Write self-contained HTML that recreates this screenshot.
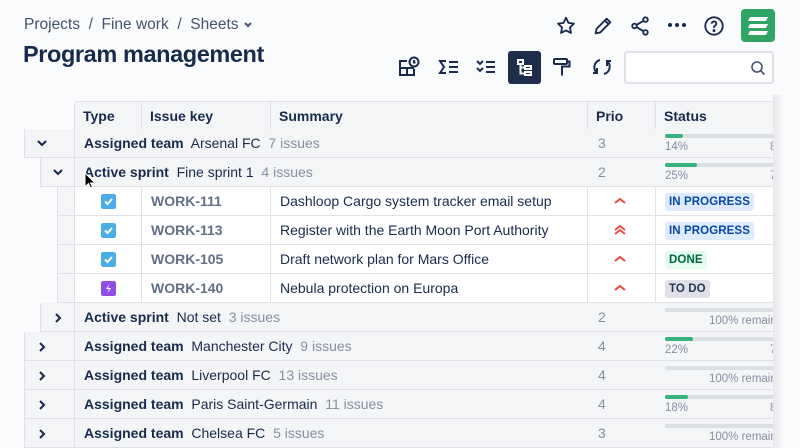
<!DOCTYPE html>
<html><head><style>
*{box-sizing:border-box;margin:0;padding:0}
body{width:800px;height:448px;overflow:hidden;background:#fafbfc;font-family:"Liberation Sans",sans-serif;color:#172b4d;position:relative}
.a{position:absolute}
.bc{left:24px;top:16px;font-size:15.5px;color:#44546f}
h1{position:absolute;left:23px;top:41px;font-size:23.5px;font-weight:bold;color:#172b4d;letter-spacing:-0.4px}
.tbl{position:absolute;left:0;top:0;width:773px;height:448px;overflow:hidden}
.row{position:absolute;height:29px;border-bottom:1px solid #dfe1e6;font-size:14px;line-height:28px;white-space:nowrap}
.g{background:#f4f5f7}
.cell{position:absolute;top:0;height:28px;border-right:1px solid #dfe1e6}
b{font-weight:bold;color:#172b4d}
.mut{color:#8590a2}
.num{position:absolute;color:#8590a2}
.bar{position:absolute;top:5px;width:140px;height:4px;background:#dcdfe4;border-radius:2px}
.bar i{display:block;height:4px;background:#36b37e;border-radius:2px}
.pct{position:absolute;top:12px;font-size:11.5px;line-height:12px;color:#8590a2}
.rem{position:absolute;top:12px;font-size:11.5px;line-height:12px;color:#8590a2}
.chev{position:absolute;top:9px}
.lz{font-size:11.5px;font-weight:bold;padding:1px 4px;border-radius:3px;line-height:16px;position:absolute;top:6px;letter-spacing:.1px}
.shadow{position:absolute;left:773px;top:95px;width:10px;height:353px;background:linear-gradient(90deg,rgba(0,0,0,.08),rgba(0,0,0,0))}
.ic{position:absolute;top:56px}
.ty{position:absolute;left:43px;top:7px;width:15px;height:15px;border-radius:2px}
.pr{position:absolute;left:555px;top:8px}
</style></head><body>
<div class="a bc">Projects&nbsp;&nbsp;/&nbsp;&nbsp;Fine work&nbsp;&nbsp;/&nbsp;&nbsp;Sheets <svg width="10" height="8" viewBox="0 0 10 8" fill="none" stroke="#44546f" stroke-width="2"><path d="M2 2l3 3 3-3"/></svg></div>
<h1>Program management</h1>

<svg class="a" style="left:555px;top:15px" width="22" height="22" viewBox="0 0 24 24" fill="none" stroke="#172b4d" stroke-width="2" stroke-linejoin="round"><path d="M12 3l2.7 5.6 6 .8-4.4 4.2 1.1 6L12 16.8 6.6 19.6l1.1-6L3.3 9.4l6-.8z"/></svg>
<svg class="a" style="left:592px;top:15px" width="22" height="22" viewBox="0 0 24 24" fill="none" stroke="#172b4d" stroke-width="2" stroke-linejoin="round"><path d="M4 20l1-5L16 4l4 4L9 19zM14 6l4 4"/></svg>
<svg class="a" style="left:629px;top:15px" width="22" height="22" viewBox="0 0 24 24" fill="none" stroke="#172b4d" stroke-width="2"><circle cx="18" cy="5" r="2.5"/><circle cx="6" cy="12" r="2.5"/><circle cx="18" cy="19" r="2.5"/><path d="M8.2 10.8l7.6-4.5M8.2 13.2l7.6 4.5"/></svg>
<svg class="a" style="left:666px;top:20px" width="22" height="10" viewBox="0 0 22 10" fill="#172b4d"><circle cx="4" cy="5" r="2"/><circle cx="11" cy="5" r="2"/><circle cx="18" cy="5" r="2"/></svg>
<svg class="a" style="left:703px;top:15px" width="22" height="22" viewBox="0 0 24 24" fill="none" stroke="#172b4d" stroke-width="2"><circle cx="12" cy="12" r="9.5"/><path d="M9.5 9.5a2.5 2.5 0 1 1 3.5 2.3c-.7.3-1 .9-1 1.6v.6"/><circle cx="12" cy="17" r=".6" fill="#172b4d"/></svg>
<div class="a" style="left:741px;top:9px;width:34px;height:33px;background:#2fa463;border-radius:4px"></div>
<svg class="a" style="left:741px;top:9px" width="34" height="33" viewBox="0 0 34 33" fill="#fff"><path d="M9 8h18l-2 4H7zM9 15h18l-2 4H7zM9 22h18l-2 4H7z"/></svg>

<svg class="ic" style="left:398px" width="24" height="22" viewBox="0 0 24 22" fill="none" stroke="#172b4d" stroke-width="2"><path d="M9 5H2v14h14v-6M2 12h14M9 12v7"/><circle cx="16" cy="6" r="4.5"/><path d="M16 4v2.5h1.5"/></svg>
<svg class="ic" style="left:437px" width="24" height="22" viewBox="0 0 24 22" fill="none" stroke="#172b4d" stroke-width="2"><path d="M9 5H3l4 6-4 6h6M12 6h9M12 11h9M12 16h9"/></svg>
<svg class="ic" style="left:474px" width="24" height="22" viewBox="0 0 24 22" fill="none" stroke="#172b4d" stroke-width="2"><path d="M3 5l3 3 3-3M3 12l3 3 3-3M12 6h9M12 11h9M12 16h9"/></svg>
<div class="a" style="left:508px;top:51px;width:33px;height:33px;background:#1d2d4b;border-radius:3px"></div>
<svg class="a" style="left:508px;top:51px" width="33" height="33" viewBox="0 0 33 33" fill="none" stroke="#fff" stroke-width="2"><rect x="10" y="9" width="5" height="4"/><rect x="17" y="15" width="6" height="3"/><rect x="17" y="21" width="6" height="3"/><path d="M12.5 13v9.5H17M12.5 16.5H17"/></svg>
<svg class="ic" style="left:551px" width="22" height="22" viewBox="0 0 22 22" fill="none" stroke="#172b4d" stroke-width="2"><rect x="3" y="3" width="13" height="5" rx="1"/><path d="M16 5.5h2.5v5H11v3M11 13.5v6"/></svg>
<svg class="ic" style="left:591px" width="22" height="22" viewBox="0 0 22 22" fill="none" stroke="#172b4d" stroke-width="2"><path d="M9 4A7.5 7.5 0 0 0 6 17M13 18A7.5 7.5 0 0 0 16 5M6 12v5H2M16 10V5h4"/></svg>
<div class="a" style="left:624px;top:51px;width:150px;height:33px;border:2px solid #dfe1e6;border-radius:3px;background:#fff"></div>
<svg class="a" style="left:750px;top:60px" width="16" height="16" viewBox="0 0 16 16" fill="none" stroke="#44546f" stroke-width="1.6"><circle cx="7" cy="7" r="5"/><path d="M11 11l3.5 3.5"/></svg>

<div class="tbl">
<div class="row" style="left:74px;top:101px;width:700px;background:#f4f5f7;border-top:1px solid #dfe1e6;border-left:1px solid #dfe1e6;border-radius:3px 0 0 0">
 <div class="cell" style="left:0;width:67px;padding-left:8px"><b>Type</b></div>
 <div class="cell" style="left:67px;width:129px;padding-left:8px"><b>Issue key</b></div>
 <div class="cell" style="left:196px;width:317px;padding-left:8px"><b>Summary</b></div>
 <div class="cell" style="left:513px;width:68px;padding-left:8px"><b>Prio</b></div>
 <div class="cell" style="left:581px;width:130px;padding-left:8px;border:0"><b>Status</b></div>
</div>

<div class="row g" style="left:24px;top:129px;width:760px;border-left:1px solid #dfe1e6">
 <div class="cell" style="left:0;width:50px"></div><svg class="chev" style="left:11px" width="12" height="10" viewBox="0 0 12 10" fill="none" stroke="#172b4d" stroke-width="2"><path d="M2 3l4 4 4-4"/></svg>
 <span class="a" style="left:59px"><b>Assigned team</b>&nbsp; Arsenal FC&nbsp; <span class="mut">7 issues</span></span>
 <span class="num" style="left:573px">3</span>
 <div class="bar" style="left:640px"><i style="width:18px"></i></div><span class="pct" style="left:640px">14%</span><span class="pct" style="left:745px">86%</span>
</div>
<div class="row g" style="left:40px;top:158px;width:740px;border-left:1px solid #dfe1e6">
 <div class="cell" style="left:0;width:34px"></div><svg class="chev" style="left:11px" width="12" height="10" viewBox="0 0 12 10" fill="none" stroke="#172b4d" stroke-width="2"><path d="M2 3l4 4 4-4"/></svg>
 <span class="a" style="left:43px"><b>Active sprint</b>&nbsp; Fine sprint 1&nbsp; <span class="mut">4 issues</span></span>
 <span class="num" style="left:557px">2</span>
 <div class="bar" style="left:624px"><i style="width:32px"></i></div><span class="pct" style="left:624px">25%</span><span class="pct" style="left:729px">75%</span>
</div>
<svg class="a" style="left:84px;top:172px" width="12" height="18" viewBox="0 0 12 18"><path d="M1 1v14l3.5-3.5 2.5 5.5 2-1-2.5-5H11z" fill="#000" stroke="#fff" stroke-width="1"/></svg>

<div class="row" style="left:57px;top:187px;width:720px;background:#fff;border-left:1px solid #dfe1e6">
 <div class="cell" style="left:0;width:17px;background:#f4f5f7"></div><div class="cell" style="left:17px;width:67px"></div><div class="cell" style="left:84px;width:129px"></div><div class="cell" style="left:213px;width:317px"></div><div class="cell" style="left:530px;width:68px"></div>
 <svg class="ty" viewBox="0 0 15 15"><rect width="15" height="15" rx="2" fill="#4bade8"/><path d="M4 7.5l2.5 2.5 4.5-5" fill="none" stroke="#fff" stroke-width="2"/></svg>
 <span class="a" style="left:93px;color:#626f86;font-weight:bold">WORK-111</span>
 <span class="a" style="left:222px">Dashloop Cargo system tracker email setup</span>
 <svg class="pr" width="14" height="12" viewBox="0 0 14 12" fill="none" stroke="#e5493a" stroke-width="2"><path d="M2 8l5-4 5 4"/></svg>
 <span class="lz" style="left:607px;background:#deebff;color:#0747a6">IN PROGRESS</span>
</div>
<div class="row" style="left:57px;top:216px;width:720px;background:#fff;border-left:1px solid #dfe1e6">
 <div class="cell" style="left:0;width:17px;background:#f4f5f7"></div><div class="cell" style="left:17px;width:67px"></div><div class="cell" style="left:84px;width:129px"></div><div class="cell" style="left:213px;width:317px"></div><div class="cell" style="left:530px;width:68px"></div>
 <svg class="ty" viewBox="0 0 15 15"><rect width="15" height="15" rx="2" fill="#4bade8"/><path d="M4 7.5l2.5 2.5 4.5-5" fill="none" stroke="#fff" stroke-width="2"/></svg>
 <span class="a" style="left:93px;color:#626f86;font-weight:bold">WORK-113</span>
 <span class="a" style="left:222px">Register with the Earth Moon Port Authority</span>
 <svg class="pr" width="14" height="12" viewBox="0 0 14 12" fill="none" stroke="#e5493a" stroke-width="1.8"><path d="M2 6l5-4 5 4M2 10l5-4 5 4"/></svg>
 <span class="lz" style="left:607px;background:#deebff;color:#0747a6">IN PROGRESS</span>
</div>
<div class="row" style="left:57px;top:245px;width:720px;background:#fff;border-left:1px solid #dfe1e6">
 <div class="cell" style="left:0;width:17px;background:#f4f5f7"></div><div class="cell" style="left:17px;width:67px"></div><div class="cell" style="left:84px;width:129px"></div><div class="cell" style="left:213px;width:317px"></div><div class="cell" style="left:530px;width:68px"></div>
 <svg class="ty" viewBox="0 0 15 15"><rect width="15" height="15" rx="2" fill="#4bade8"/><path d="M4 7.5l2.5 2.5 4.5-5" fill="none" stroke="#fff" stroke-width="2"/></svg>
 <span class="a" style="left:93px;color:#626f86;font-weight:bold">WORK-105</span>
 <span class="a" style="left:222px">Draft network plan for Mars Office</span>
 <svg class="pr" width="14" height="12" viewBox="0 0 14 12" fill="none" stroke="#e5493a" stroke-width="2"><path d="M2 8l5-4 5 4"/></svg>
 <span class="lz" style="left:607px;background:#e3fcef;color:#006644">DONE</span>
</div>
<div class="row" style="left:57px;top:274px;width:720px;background:#fff;border-left:1px solid #dfe1e6">
 <div class="cell" style="left:0;width:17px;background:#f4f5f7"></div><div class="cell" style="left:17px;width:67px"></div><div class="cell" style="left:84px;width:129px"></div><div class="cell" style="left:213px;width:317px"></div><div class="cell" style="left:530px;width:68px"></div>
 <svg class="ty" viewBox="0 0 15 15"><rect width="15" height="15" rx="2" fill="#904ee2"/><path d="M8.5 3L5 8h3l-1.5 4L10 7H7z" fill="#fff"/></svg>
 <span class="a" style="left:93px;color:#626f86;font-weight:bold">WORK-140</span>
 <span class="a" style="left:222px">Nebula protection on Europa</span>
 <svg class="pr" width="14" height="12" viewBox="0 0 14 12" fill="none" stroke="#e5493a" stroke-width="2"><path d="M2 8l5-4 5 4"/></svg>
 <span class="lz" style="left:607px;background:#dfe1e6;color:#253858">TO DO</span>
</div>

<div class="row g" style="left:40px;top:303px;width:740px;border-left:1px solid #dfe1e6">
 <div class="cell" style="left:0;width:34px"></div><svg class="chev" style="left:12px" width="10" height="12" viewBox="0 0 10 12" fill="none" stroke="#172b4d" stroke-width="2"><path d="M3 2l4 4-4 4"/></svg>
 <span class="a" style="left:43px"><b>Active sprint</b>&nbsp; Not set&nbsp; <span class="mut">3 issues</span></span>
 <span class="num" style="left:557px">2</span>
 <div class="bar" style="left:624px"></div><span class="rem" style="left:668px">100% remain</span>
</div>

<div class="row g" style="left:24px;top:332px;width:760px;border-left:1px solid #dfe1e6">
 <div class="cell" style="left:0;width:50px"></div><svg class="chev" style="left:12px" width="10" height="12" viewBox="0 0 10 12" fill="none" stroke="#172b4d" stroke-width="2"><path d="M3 2l4 4-4 4"/></svg>
 <span class="a" style="left:59px"><b>Assigned team</b>&nbsp; Manchester City&nbsp; <span class="mut">9 issues</span></span>
 <span class="num" style="left:573px">4</span>
 <div class="bar" style="left:640px"><i style="width:28px"></i></div><span class="pct" style="left:640px">22%</span><span class="pct" style="left:745px">78%</span>
</div>
<div class="row g" style="left:24px;top:361px;width:760px;border-left:1px solid #dfe1e6">
 <div class="cell" style="left:0;width:50px"></div><svg class="chev" style="left:12px" width="10" height="12" viewBox="0 0 10 12" fill="none" stroke="#172b4d" stroke-width="2"><path d="M3 2l4 4-4 4"/></svg>
 <span class="a" style="left:59px"><b>Assigned team</b>&nbsp; Liverpool FC&nbsp; <span class="mut">13 issues</span></span>
 <span class="num" style="left:573px">4</span>
 <div class="bar" style="left:640px"></div><span class="rem" style="left:684px">100% remain</span>
</div>
<div class="row g" style="left:24px;top:390px;width:760px;border-left:1px solid #dfe1e6">
 <div class="cell" style="left:0;width:50px"></div><svg class="chev" style="left:12px" width="10" height="12" viewBox="0 0 10 12" fill="none" stroke="#172b4d" stroke-width="2"><path d="M3 2l4 4-4 4"/></svg>
 <span class="a" style="left:59px"><b>Assigned team</b>&nbsp; Paris Saint-Germain&nbsp; <span class="mut">11 issues</span></span>
 <span class="num" style="left:573px">4</span>
 <div class="bar" style="left:640px"><i style="width:23px"></i></div><span class="pct" style="left:640px">18%</span><span class="pct" style="left:745px">82%</span>
</div>
<div class="row g" style="left:24px;top:419px;width:760px;border-left:1px solid #dfe1e6">
 <div class="cell" style="left:0;width:50px"></div><svg class="chev" style="left:12px" width="10" height="12" viewBox="0 0 10 12" fill="none" stroke="#172b4d" stroke-width="2"><path d="M3 2l4 4-4 4"/></svg>
 <span class="a" style="left:59px"><b>Assigned team</b>&nbsp; Chelsea FC&nbsp; <span class="mut">5 issues</span></span>
 <span class="num" style="left:573px">3</span>
 <div class="bar" style="left:640px"></div><span class="rem" style="left:684px">100% remain</span>
</div>
</div>
<div class="shadow"></div>
</body></html>
